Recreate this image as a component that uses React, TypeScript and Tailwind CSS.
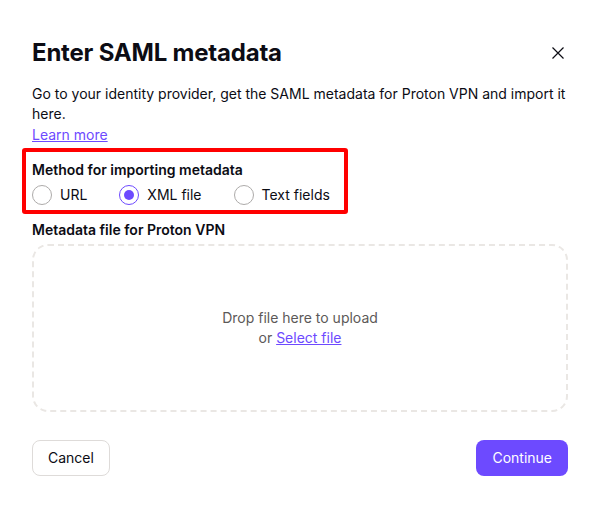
import * as React from 'react'

function Radio({ label, checked }: { label: string; checked?: boolean }) {
  return (
    <label className="flex items-center gap-2 cursor-pointer">
      <span
        className={
          'flex h-5 w-5 items-center justify-center rounded-full border bg-white ' +
          (checked ? 'border-[#6d4aff]' : 'border-[#adabaa]')
        }
      >
        {checked && <span className="h-2.5 w-2.5 rounded-full bg-[#6d4aff]" />}
      </span>
      <span>{label}</span>
    </label>
  )
}

export default function App() {
  return (
    <div className="min-h-[508px] w-[600px] bg-white text-[14px] leading-5 text-[#0c0c14] font-['Inter','Noto_Sans',sans-serif]">
      <div className="px-8 pt-[38px]">
        {/* Header */}
        <div className="flex items-start justify-between">
          <h1 className="text-[24px] leading-[30px] font-bold tracking-[-0.2px]">Enter SAML metadata</h1>
          <button className="mt-[3px] -mr-[2px] p-1 text-[#0c0c14]">
            <svg width="16" height="16" viewBox="0 0 16 16" fill="none" stroke="currentColor" strokeWidth="1.2">
              <path d="M2.5 2.5l11 11M13.5 2.5l-11 11" />
            </svg>
          </button>
        </div>

        <p className="mt-[16px] text-[#0c0c14]">
          Go to your identity provider, get the SAML metadata for Proton VPN and import it here.
        </p>
        <a href="#" className="block w-fit pt-px text-[#6d4aff] underline">Learn more</a>

        {/* Method */}
        <div className="-mx-[10px] mt-[3px] w-[326px] rounded-[3px] border-4 border-[#ff0000] px-[6px] pt-[8px] pb-[5px]">
          <div className="font-semibold">Method for importing metadata</div>
          <div className="mt-[5px] flex items-center gap-8">
            <Radio label="URL" />
            <Radio label="XML file" checked />
            <Radio label="Text fields" />
          </div>
        </div>

        <div className="mt-[6px] font-semibold">Metadata file for Proton VPN</div>

        {/* Dropzone */}
        <div className="mt-[4px] flex h-[168px] flex-col items-center justify-center rounded-[16px] border-2 border-dashed border-[#eae7e4] text-center text-[#5c5958]">
          <div>Drop file here to upload</div>
          <div>
            or <a href="#" className="text-[#6d4aff] underline">Select file</a>
          </div>
        </div>

        {/* Footer */}
        <div className="mt-[28px] flex items-center justify-between">
          <button className="h-9 rounded-lg border border-[#dedbd9] bg-white px-[15px] text-[#0c0c14]">Cancel</button>
          <button className="h-9 rounded-lg bg-[#6d4aff] px-4 text-white">Continue</button>
        </div>
      </div>
    </div>
  )
}
